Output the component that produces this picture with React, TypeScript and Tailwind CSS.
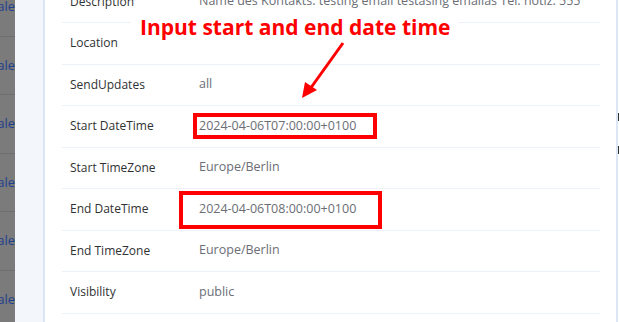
const rows = [
  { label: "Description", value: "Name des Kontakts: testing email testasing emailas Tel. notiz: 555" },
  { label: "Location", value: "" },
  { label: "SendUpdates", value: "all" },
  { label: "Start DateTime", value: "2024-04-06T07:00:00+0100" },
  { label: "Start TimeZone", value: "Europe/Berlin" },
  { label: "End DateTime", value: "2024-04-06T08:00:00+0100" },
  { label: "End TimeZone", value: "Europe/Berlin" },
  { label: "Visibility", value: "public" },
  { label: "", value: "" },
];

export default function App() {
  return (
    <div
      className="relative flex h-[322px] w-[619px] overflow-hidden bg-white text-[12.5px]"
      style={{ fontFamily: '"Open Sans", "Noto Sans", sans-serif' }}
    >
      {/* page behind the drawer */}
      <div className="mt-[-22px] flex w-[15px] shrink-0 flex-col bg-[#7b7b7b]">
        {[0, 1, 2, 3, 4, 5, 6].map((i) => (
          <div
            key={i}
            className="flex h-[58.5px] shrink-0 items-center justify-end overflow-hidden border-b border-[#6e6e6e] text-[13px] text-[#1f3f8f]"
          >
            <span className="whitespace-nowrap">cale</span>
          </div>
        ))}
      </div>
      <div className="w-[30px] shrink-0 border-r-2 border-[#dbe5f6] bg-[#f3f6fa]" />

      {/* drawer content */}
      <div className="flex-1 pl-[17px] pr-[16px]">
        <div className="mt-[-18.5px] flex flex-col">
          {rows.map((r, i) => (
            <div key={i} className="flex h-[41.5px] shrink-0 gap-[2px] border-b border-[#edf2fa]">
              <div className="flex w-[115px] items-center pl-2 text-[12px] text-[#303133]">{r.label}</div>
              <div className="flex flex-1 items-center whitespace-nowrap pl-[20px] text-[#6b6e75]">{r.value}</div>
            </div>
          ))}
        </div>
      </div>

      <div className="w-[3px] shrink-0 border-l-2 border-[#dde6f5] bg-white" />
      <div className="absolute right-0 top-[113px] h-[8px] w-[1px] bg-[#333]" />
      <div className="absolute right-0 top-[146px] h-[8px] w-[1px] bg-[#333]" />

      {/* annotations */}
      <div className="absolute left-[131px] top-[11px] bg-white px-[9px] text-[21px] font-bold leading-[32px] text-[#ff0000]">
        Input start and end date time
      </div>
      <svg className="absolute left-0 top-0" width="619" height="322">
        <line x1="343" y1="43" x2="310" y2="89" stroke="#ff0000" strokeWidth="3" />
        <polygon points="302,98 305,82 317,90" fill="#ff0000" />
      </svg>
      <div className="absolute left-[193px] top-[113px] h-[26px] w-[184px] border-4 border-[#ff0000]" />
      <div className="absolute left-[179px] top-[191px] h-[38px] w-[203px] border-4 border-[#ff0000]" />
    </div>
  );
}
